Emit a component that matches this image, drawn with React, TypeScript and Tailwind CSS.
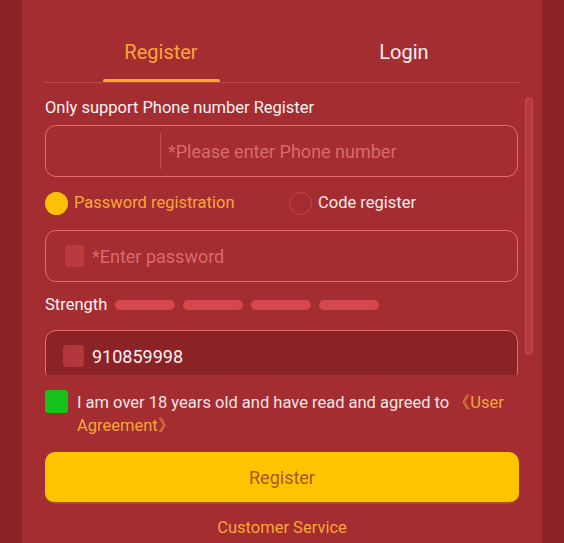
import React from "react";

const font = { fontFamily: "Roboto, 'Noto Sans', sans-serif" };

function Radio({ checked, label }: { checked: boolean; label: string }) {
  return (
    <div className="flex items-center gap-[6px]">
      {checked ? (
        <span className="h-[23px] w-[23px] rounded-full bg-[#ffc107]" />
      ) : (
        <span className="h-[23px] w-[23px] rounded-full border border-[#c8464a]" />
      )}
      <span className={`text-[16.5px] leading-[22px] ${checked ? "text-[#f9a63a]" : "text-[#fbeaea]"}`}>
        {label}
      </span>
    </div>
  );
}

export default function App() {
  return (
    <div className="flex h-[543px] w-full overflow-hidden bg-[#8b2327] px-[22px]" style={font}>
      <div className="flex flex-1 flex-col bg-[#a42d31]">
        {/* tabs */}
        <div className="mx-[22px] flex h-[83px] border-b border-[#bd4649]">
          <div className="flex flex-1 flex-col items-center pt-[38px]">
            <span className="-ml-[4px] text-[20px] leading-[28px] text-[#f9a63a]">Register</span>
            <span className="-ml-[4px] mt-auto h-[3px] w-[117px] rounded-full bg-[#f9a825]" />
          </div>
          <div className="flex flex-1 flex-col items-center pt-[38px]">
            <span className="ml-[6px] text-[20px] leading-[28px] text-[#fdf0f0]">Login</span>
          </div>
        </div>

        {/* scroll area */}
        <div className="relative h-[292px] overflow-hidden pl-[23px] pr-[24px] pt-[14px]">
          <div className="text-[16.5px] leading-[22px] text-[#fdf2f2]">Only support Phone number Register</div>

          <div className="mt-[6px] flex h-[52px] items-center rounded-[11px] border-[1.5px] border-[#e46c6c]">
            <div className="w-[114px] shrink-0" />
            <div className="h-[36px] w-px bg-[#c44d50]" />
            <span className="ml-[7px] text-[18px] text-[#d86a6b]">*Please enter Phone number</span>
          </div>

          <div className="mt-[14px] flex h-[24px] items-center">
            <div className="w-[244px]">
              <Radio checked label="Password registration" />
            </div>
            <Radio checked={false} label="Code register" />
          </div>

          <div className="mt-[15px] flex h-[52px] items-center rounded-[11px] border-[1.5px] border-[#e46c6c] pl-[19px]">
            <span className="h-[22px] w-[19px] rounded-[3px] bg-[#b93a3f]" />
            <span className="ml-[8px] text-[18px] text-[#d86a6b]">*Enter password</span>
          </div>

          <div className="mt-[12px] flex h-[22px] items-center">
            <span className="text-[16.5px] leading-[22px] text-[#fdf2f2]">Strength</span>
            <div className="ml-[8px] flex gap-[8px]">
              <span className="h-[10px] w-[60px] rounded-full bg-[#d4474c]" />
              <span className="h-[10px] w-[60px] rounded-full bg-[#d4474c]" />
              <span className="h-[10px] w-[60px] rounded-full bg-[#d4474c]" />
              <span className="h-[10px] w-[60px] rounded-full bg-[#d4474c]" />
            </div>
          </div>

          <div className="mt-[14px] flex h-[52px] items-center rounded-[11px] border-[1.5px] border-[#e46c6c] bg-[#8b2226] pl-[17px]">
            <span className="h-[22px] w-[21px] rounded-[3px] bg-[#b3363b]" />
            <span className="ml-[8px] text-[18px] text-[#fdf2f2]">910859998</span>
          </div>

          <div className="absolute right-[9px] top-[14px] h-[258px] w-[8px] rounded-full border border-[#c8484c] bg-[#b73a3e]" />
        </div>

        {/* agreement */}
        <div className="mx-[23px] mt-[15px] flex">
          <span className="h-[23px] w-[23px] shrink-0 rounded-[3px] bg-[#15c21a]" />
          <p className="ml-[9px] mt-[1px] text-[16.5px] leading-[23px] text-[#f7e3e3]">
            I am over 18 years old and have read and agreed to{" "}
            <span className="text-[#f9a63a]">《User Agreement》</span>
          </p>
        </div>

        <button className="mx-[23px] mt-[15px] h-[52px] rounded-[10px] border-b-2 border-[#a0521e] bg-[#ffc400] text-[18px] text-[#a65a22]">
          Register
        </button>

        <div className="mt-[13px] text-center text-[16.5px] leading-[22px] text-[#f9a63a]">Customer Service</div>
      </div>
    </div>
  );
}
